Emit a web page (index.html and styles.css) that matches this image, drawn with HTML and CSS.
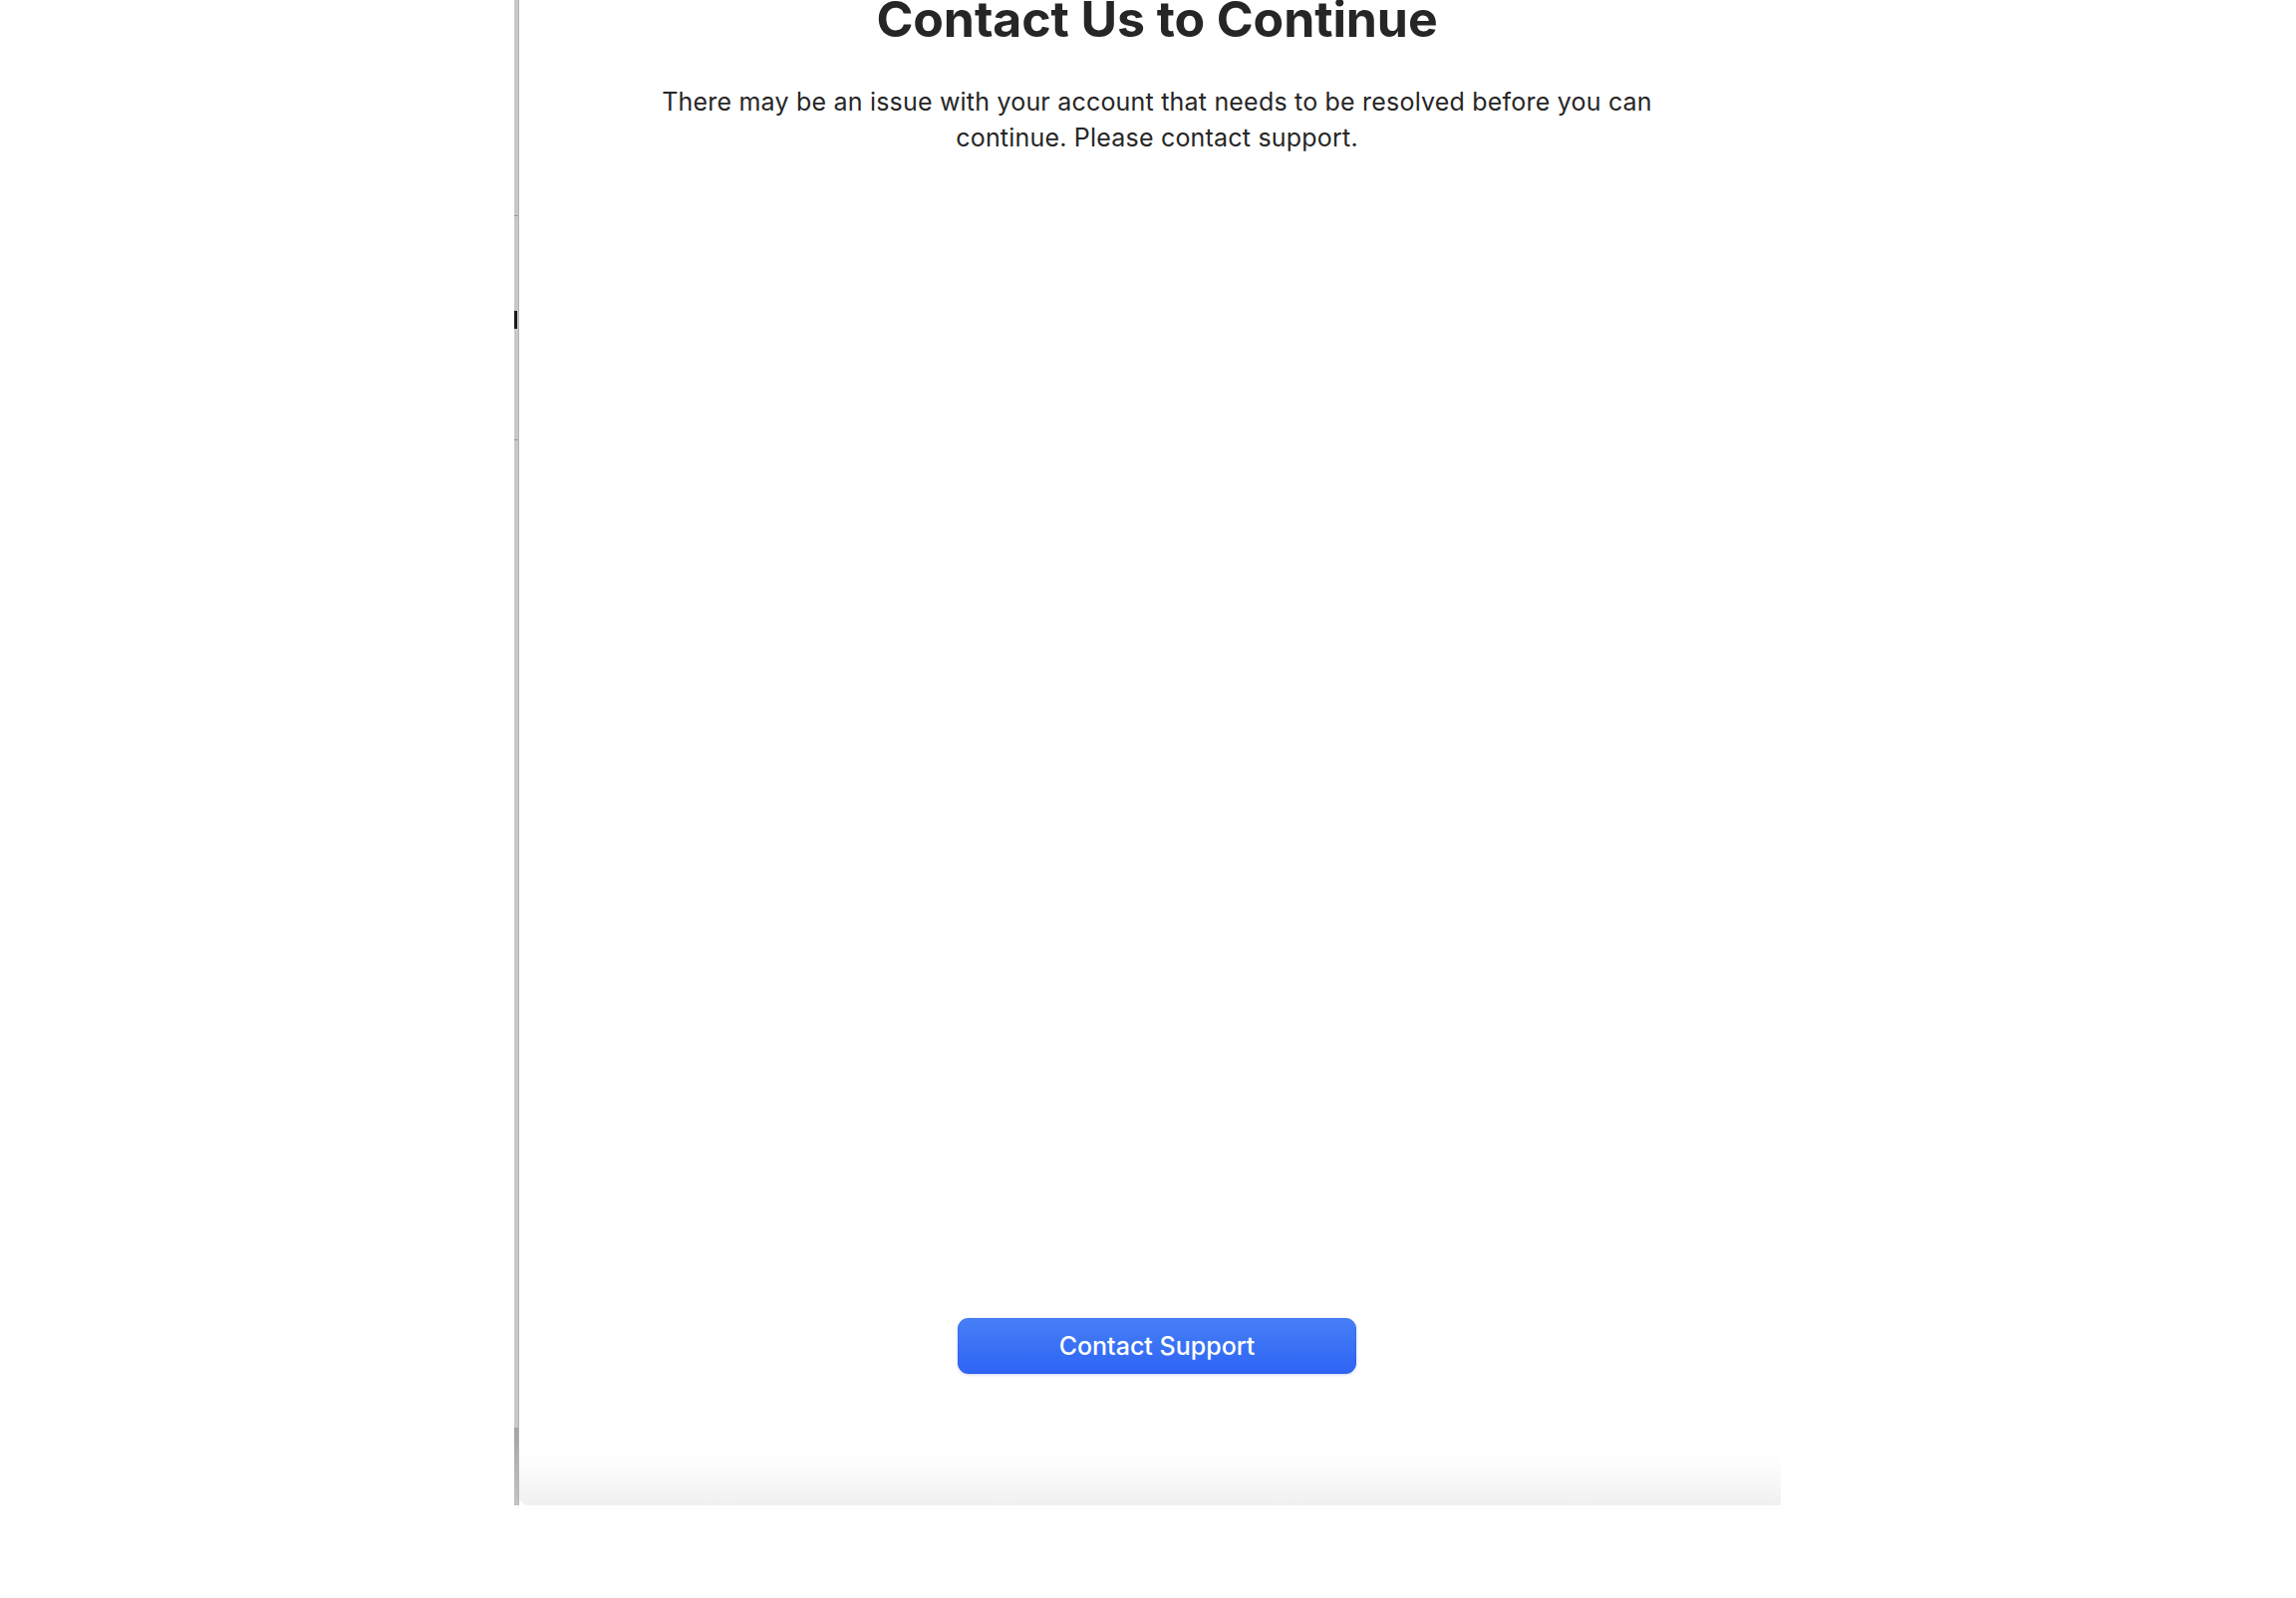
FILE: index.html
```html
<!DOCTYPE html>
<html lang="en">
<head>
<meta charset="utf-8">
<title>Contact Us to Continue</title>
<link rel="stylesheet" href="styles.css">
</head>
<body>
<div class="stage">
  <div class="strip">
    <div class="seg seg-a"></div>
    <div class="seg seg-b"><span class="mark"></span></div>
    <div class="seg seg-c"></div>
    <div class="seg seg-d"></div>
  </div>
  <main class="panel">
    <h1 class="title">Contact Us to Continue</h1>
    <p class="lead">There may be an issue with your account that needs to be resolved before you can continue. Please contact support.</p>
    <button class="cta" type="button">Contact Support</button>
  </main>
</div>
</body>
</html>
```
FILE: styles.css
```css
html, body {
  margin: 0;
  padding: 0;
  background: #ffffff;
}
body {
  font-family: Inter, "Noto Sans", "Liberation Sans", sans-serif;
  color: #262626;
  overflow: hidden;
}
.stage {
  display: flex;
  align-items: flex-start;
  padding-left: 516px;
  height: 1604px;
}
.strip {
  width: 5px;
  height: 1511px;
  display: flex;
  flex-direction: column;
  background: #c8c8c8;
  border-right: 1px solid #b4b4b4;
  box-sizing: border-box;
}
.seg { flex: none; }
.seg-a { height: 217px; border-bottom: 1px solid #9a9a9a; box-sizing: border-box; }
.seg-b { height: 225px; border-bottom: 1px solid #9a9a9a; box-sizing: border-box; position: relative; }
.mark {
  position: absolute;
  left: 0;
  top: 95px;
  width: 3px;
  height: 18px;
  background: #1a1a1a;
}
.seg-c { height: 991px; }
.seg-d {
  height: 78px;
  background: linear-gradient(to bottom, #a4a4a4, #c4c4c4);
}
.panel {
  width: 1266px;
  height: 1511px;
  box-sizing: border-box;
  padding: 0 0 132px 14px;
  display: flex;
  flex-direction: column;
  align-items: center;
  background: linear-gradient(to bottom, #ffffff 0, #ffffff 1450px, #fdfdfd 1470px, #f0f0f0 1511px);
  border-bottom-left-radius: 9px;
  overflow: hidden;
}
.title {
  margin: -11px 0 0;
  font-size: 50px;
  line-height: 60px;
  font-weight: 700;
  letter-spacing: -0.1px;
  color: #262626;
  text-align: center;
}
.lead {
  margin: 35px 0 0;
  max-width: 1020px;
  font-size: 25px;
  line-height: 36px;
  font-weight: 400;
  letter-spacing: 0.2px;
  text-align: center;
  color: #262626;
}
.cta {
  margin-top: auto;
  width: 400px;
  height: 56px;
  border: none;
  border-radius: 11px;
  background: linear-gradient(to bottom, #467ff6, #2e64f4);
  box-shadow: 0 1px 3px rgba(40, 80, 200, 0.25), inset 0 0 0 0.5px rgba(20, 60, 200, 0.3);
  color: #ffffff;
  font-family: Inter, "Noto Sans", "Liberation Sans", sans-serif;
  font-size: 25px;
  font-weight: 500;
  line-height: 56px;
  padding: 0;
}
```
